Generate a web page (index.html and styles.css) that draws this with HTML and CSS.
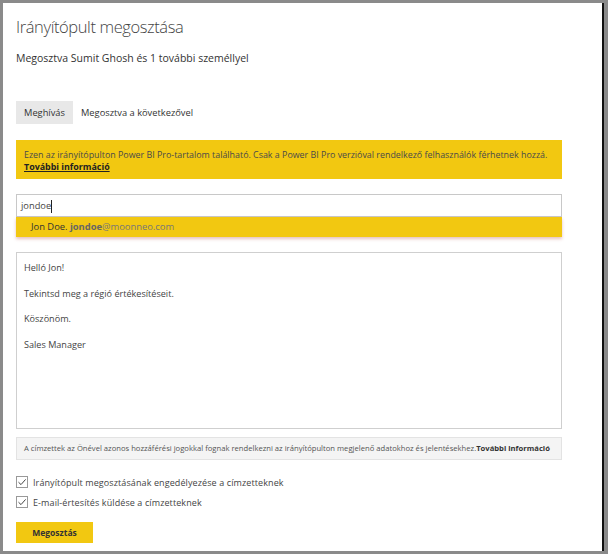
FILE: index.html
```html
<!DOCTYPE html>
<html lang="hu">
<head>
<meta charset="utf-8">
<link rel="stylesheet" href="styles.css">
</head>
<body>
<div class="dialog">
  <h1 class="title">Irányítópult megosztása</h1>
  <p class="subtitle">Megosztva Sumit Ghosh és 1 további személlyel</p>
  <div class="tabs">
    <span class="tab active">Meghívás</span>
    <span class="tab">Megosztva a következővel</span>
  </div>
  <div class="banner">
    <div>Ezen az irányítópulton Power BI Pro-tartalom található. Csak a Power BI Pro verzióval rendelkező felhasználók férhetnek hozzá.</div>
    <a class="banner-link">További információ</a>
  </div>
  <div class="picker">
    <div class="input">jondoe<span class="caret"></span></div>
    <div class="suggest"><span class="name">Jon Doe.</span> <span class="mail"><b>jondoe</b>@moonneo.com</span></div>
  </div>
  <div class="message">
    <p>Helló Jon!</p>
    <p>Tekintsd meg a régió értékesítéseit.</p>
    <p>Köszönöm.</p>
    <p>Sales Manager</p>
  </div>
  <div class="info">A címzettek az Önével azonos hozzáférési jogokkal fognak rendelkezni az irányítópulton megjelenő adatokhoz és jelentésekhez.<b>További információ</b></div>
  <label class="check"><span class="box"><svg viewBox="0 0 12 12" width="12" height="12"><path d="M2.5 6.2 L5 8.6 L9.6 3.4" fill="none" stroke="#444" stroke-width="1"/></svg></span>Irányítópult megosztásának engedélyezése a címzetteknek</label>
  <label class="check"><span class="box"><svg viewBox="0 0 12 12" width="12" height="12"><path d="M2.5 6.2 L5 8.6 L9.6 3.4" fill="none" stroke="#444" stroke-width="1"/></svg></span>E-mail-értesítés küldése a címzetteknek</label>
  <button class="share">Megosztás</button>
</div>
</body>
</html>
```
FILE: styles.css
```css
html, body {
  margin: 0;
  padding: 0;
}
body {
  background: #8a8a8a;
  width: 608px;
  height: 554px;
  overflow: hidden;
  font-family: "Open Sans", "Noto Sans", sans-serif;
  color: #333;
}
.dialog {
  box-sizing: border-box;
  margin: 3px 0 0 3px;
  width: 601px;
  height: 548px;
  background: #fff;
  border-right: 2px solid #111;
  padding: 0 0 0 13px;
}
.title {
  margin: 0;
  padding-top: 11px;
  font-size: 16.5px;
  line-height: 26px;
  font-weight: 300;
  color: #444;
  letter-spacing: -0.4px;
}
.subtitle {
  margin: 10px 0 0;
  font-size: 10.5px;
  line-height: 16px;
  color: #333;
}
.tabs {
  margin-top: 35px;
  display: flex;
  height: 23px;
  align-items: center;
  font-size: 9.3px;
}
.tab {
  height: 23px;
  line-height: 23px;
  padding: 0 8px;
  color: #333;
}
.tab.active {
  background: #e8e8e8;
  width: 57px;
  box-sizing: border-box;
  text-align: center;
  padding: 0;
}
.banner {
  margin-top: 16px;
  width: 546px;
  height: 39px;
  box-sizing: border-box;
  background: #f2c811;
  padding: 9px 8px 0;
  font-size: 8.9px;
  line-height: 12px;
  color: #4a4a4a;
  white-space: nowrap;
}
.banner-link {
  display: inline-block;
  font-weight: 700;
  color: #222;
  text-decoration: underline;
}
.picker {
  margin-top: 15px;
  width: 546px;
}
.input {
  box-sizing: border-box;
  height: 23px;
  border: 1px solid #c8c8c8;
  padding-left: 4px;
  font-size: 9.3px;
  line-height: 21px;
  color: #444;
}
.caret {
  display: inline-block;
  width: 1px;
  height: 13px;
  background: #222;
  vertical-align: middle;
}
.suggest {
  height: 20px;
  background: #f2c811;
  padding-left: 15px;
  font-size: 9.4px;
  line-height: 20px;
  box-shadow: 0 2px 3px rgba(200, 120, 110, 0.45);
}
.suggest .name {
  color: #333;
}
.suggest .mail {
  color: #777;
}
.suggest .mail b {
  color: #666;
}
.message {
  margin-top: 15px;
  box-sizing: border-box;
  width: 546px;
  height: 177px;
  border: 1px solid #cfcfcf;
  padding: 8px 7px;
  font-size: 9.1px;
  color: #444;
}
.message p {
  margin: 0 0 12.6px;
  line-height: 13px;
}
.info {
  margin-top: 8px;
  box-sizing: border-box;
  width: 546px;
  height: 23px;
  background: #f4f4f4;
  border: 1px solid #e3e3e3;
  padding-left: 7px;
  font-size: 7.65px;
  line-height: 21px;
  color: #555;
  white-space: nowrap;
}
.info b {
  color: #333;
}
.check {
  display: flex;
  align-items: center;
  height: 20px;
  font-size: 9px;
  color: #444;
  letter-spacing: 0.1px;
}
.check:first-of-type {
  margin-top: 12px;
}
.box {
  display: inline-block;
  width: 12px;
  height: 12px;
  box-sizing: border-box;
  border: 1px solid #999;
  margin-right: 5px;
  position: relative;
}
.box svg {
  position: absolute;
  left: -1px;
  top: -1px;
}
.share {
  display: block;
  margin-top: 10px;
  width: 77px;
  height: 21px;
  border: none;
  background: #f2c811;
  font-family: inherit;
  font-size: 8.5px;
  font-weight: 700;
  color: #333;
  padding: 0;
}
```
